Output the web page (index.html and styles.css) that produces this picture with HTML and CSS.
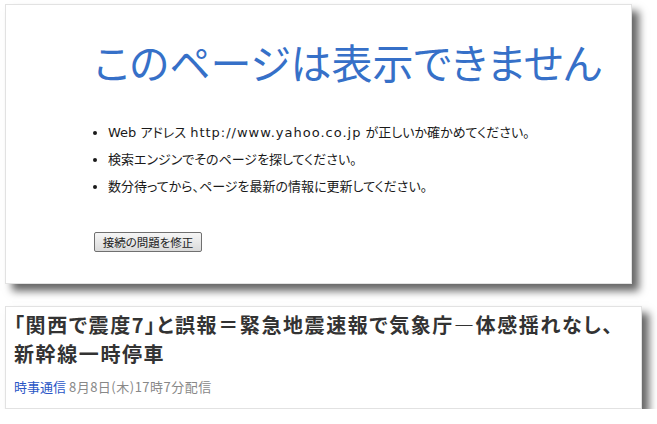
FILE: index.html
```html
<!DOCTYPE html>
<html lang="ja">
<head>
<meta charset="utf-8">
<link rel="stylesheet" href="styles.css">
</head>
<body>
<div class="page">
  <section class="card error">
    <h1 class="title">このページは表示できません</h1>
    <ul class="tips">
      <li>Web アドレス <span class="url">http://www.yahoo.co.jp</span> が正しいか確かめてください。</li>
      <li>検索エンジンでそのページを探してください。</li>
      <li>数分待ってから、ページを最新の情報に更新してください。</li>
    </ul>
    <button class="fix">接続の問題を修正</button>
  </section>
  <section class="card news">
    <h2 class="headline">「関西で震度7」と誤報＝緊急地震速報で気象庁―体感揺れなし、<br>新幹線一時停車</h2>
    <p class="meta"><span class="source">時事通信</span> <span class="date">8月8日(木)17時7分配信</span></p>
  </section>
</div>
</body>
</html>
```
FILE: styles.css
```css
html, body {
  margin: 0;
  background: #fff;
}
body {
  font-family: "Noto Sans CJK JP", "Open Sans", sans-serif;
  color: #222;
}
.page {
  padding: 4px 0 0 5px;
  display: flex;
  flex-direction: column;
  gap: 22px;
}
.card {
  background: #fff;
  border: 1px solid #e2e2e2;
  box-shadow: 7px 7px 8px rgba(0, 0, 0, 0.6);
  box-sizing: border-box;
}
.error {
  width: 627px;
  height: 280px;
  padding: 27px 0 0 88px;
}
.title {
  margin: 0;
  font-size: 41px;
  font-weight: 400;
  color: #3670c8;
  line-height: 59px;
  font-feature-settings: "palt";
}
.tips {
  margin: 28px 0 0 0;
  padding: 0 0 0 14px;
  font-family: "DejaVu Sans", "Noto Sans CJK JP", sans-serif;
  font-size: 13px;
  line-height: 27px;
  color: #1a1a1a;
  font-feature-settings: "palt";
}
.url {
  letter-spacing: 1px;
}
.fix {
  margin-top: 32px;
  font-family: "Noto Sans CJK JP", sans-serif;
  font-size: 11.5px;
  font-feature-settings: "palt";
  white-space: nowrap;
  padding: 0;
  height: 20px;
  line-height: 16px;
  width: 108px;
  background: linear-gradient(#f6f6f6, #dadada);
  border: 1px solid #707070;
  border-radius: 2px;
  color: #222;
}
.news {
  width: 637px;
  height: 103px;
  padding: 3px 0 0 8px;
}
.headline {
  margin: 0;
  font-size: 20px;
  font-weight: 700;
  line-height: 29px;
  color: #333;
  font-feature-settings: "palt";
  letter-spacing: 1.6px;
  white-space: nowrap;
}
.meta {
  margin: 9px 0 0 0;
  font-size: 13px;
  line-height: 19px;
  color: #888;
}
.source {
  color: #2a56c6;
}
.date {
  letter-spacing: 0.5px;
}
```
